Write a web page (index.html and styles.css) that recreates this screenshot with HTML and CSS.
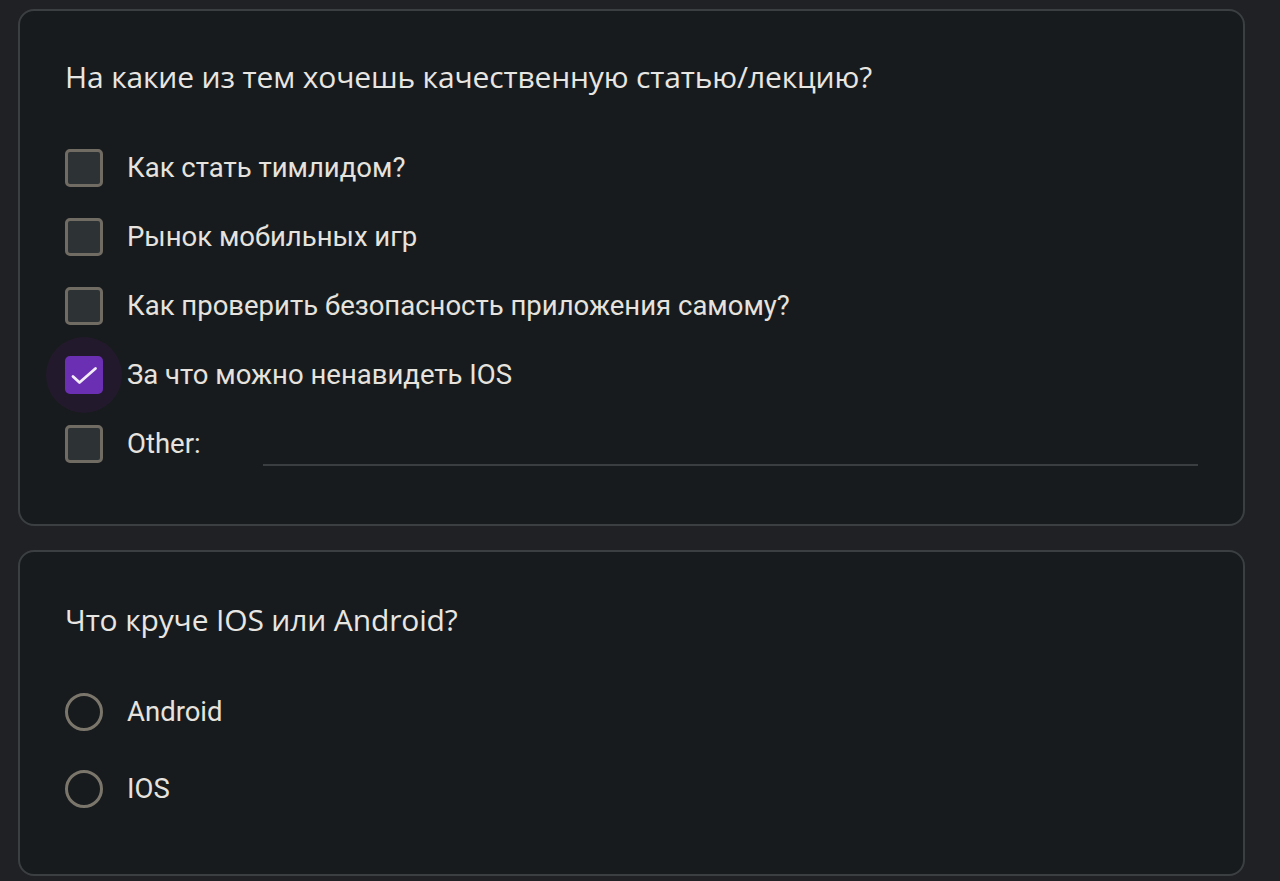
FILE: index.html
```html
<!DOCTYPE html>
<html lang="ru">
<head>
<meta charset="utf-8">
<link rel="stylesheet" href="styles.css">
</head>
<body>
<div class="page">
  <section class="card card-checks">
    <h2 class="question">На какие из тем хочешь качественную статью/лекцию?</h2>
    <div class="options">
      <label class="option"><span class="box"></span><span class="label">Как стать тимлидом?</span></label>
      <label class="option"><span class="box"></span><span class="label">Рынок мобильных игр</span></label>
      <label class="option"><span class="box"></span><span class="label">Как проверить безопасность приложения самому?</span></label>
      <label class="option"><span class="box checked"><svg viewBox="0 0 32 32" width="32" height="32"><path d="M5 17.5l6.5 6L27.5 9.5" fill="none" stroke="#f1ecf7" stroke-width="2.8" stroke-linecap="round" stroke-linejoin="round"/></svg></span><span class="label">За что можно ненавидеть IOS</span></label>
      <label class="option other"><span class="box"></span><span class="label">Other:</span><span class="other-line"></span></label>
    </div>
  </section>
  <section class="card card-radios">
    <h2 class="question">Что круче IOS или Android?</h2>
    <div class="options radios">
      <label class="option radio-opt"><span class="radio"></span><span class="label">Android</span></label>
      <label class="option radio-opt"><span class="radio"></span><span class="label">IOS</span></label>
    </div>
  </section>
</div>
</body>
</html>
```
FILE: styles.css
```css
html, body {
  margin: 0;
  padding: 0;
  background: #202124;
  height: 100%;
  overflow: hidden;
}
.page {
  padding: 9px 35px 0 18px;
  display: flex;
  flex-direction: column;
  gap: 24px;
}
.card {
  background: #181b1d;
  border: 2px solid #3b3f42;
  border-radius: 16px;
  padding: 0 45px;
  box-sizing: border-box;
}
.card-checks {
  height: 517px;
  padding-top: 46px;
  position: relative;
  z-index: 0;
}
.card-radios {
  height: 326px;
  padding-top: 48px;
}
.question {
  margin: 0;
  font-family: "Open Sans", sans-serif;
  font-weight: 400;
  font-size: 30px;
  line-height: 40px;
  color: #e8e6e3;
  letter-spacing: -0.15px;
}
.options {
  margin-top: 36px;
  display: flex;
  flex-direction: column;
}
.option {
  display: flex;
  align-items: center;
  height: 69px;
  font-family: Roboto, "Noto Sans", sans-serif;
  font-size: 27.5px;
  color: #e6e3df;
}
.box {
  width: 38px;
  height: 38px;
  box-sizing: border-box;
  border: 3px solid #716c63;
  border-radius: 5px;
  background: #2d3235;
  flex: none;
  position: relative;
  display: flex;
  align-items: center;
  justify-content: center;
}
.box.checked {
  background: #6b2fb3;
  border-color: #6b2fb3;
}
.box.checked::before {
  content: "";
  position: absolute;
  left: 50%;
  top: 50%;
  width: 76px;
  height: 76px;
  margin: -38px 0 0 -38px;
  border-radius: 50%;
  background: #221a2c;
  z-index: -1;
}
.box.checked svg { position: relative; flex: none; display: block; }
.option .label {
  margin-left: 24px;
}
.other .other-line {
  flex: 1;
  align-self: flex-end;
  margin: 0 0 12px 62px;
  height: 2px;
  background: #3a3e41;
}
.radios {
  margin-top: 33px;
}
.radio-opt {
  height: 77px;
}
.radio {
  width: 38px;
  height: 38px;
  box-sizing: border-box;
  border: 3px solid #7b766c;
  border-radius: 50%;
  flex: none;
}
```
